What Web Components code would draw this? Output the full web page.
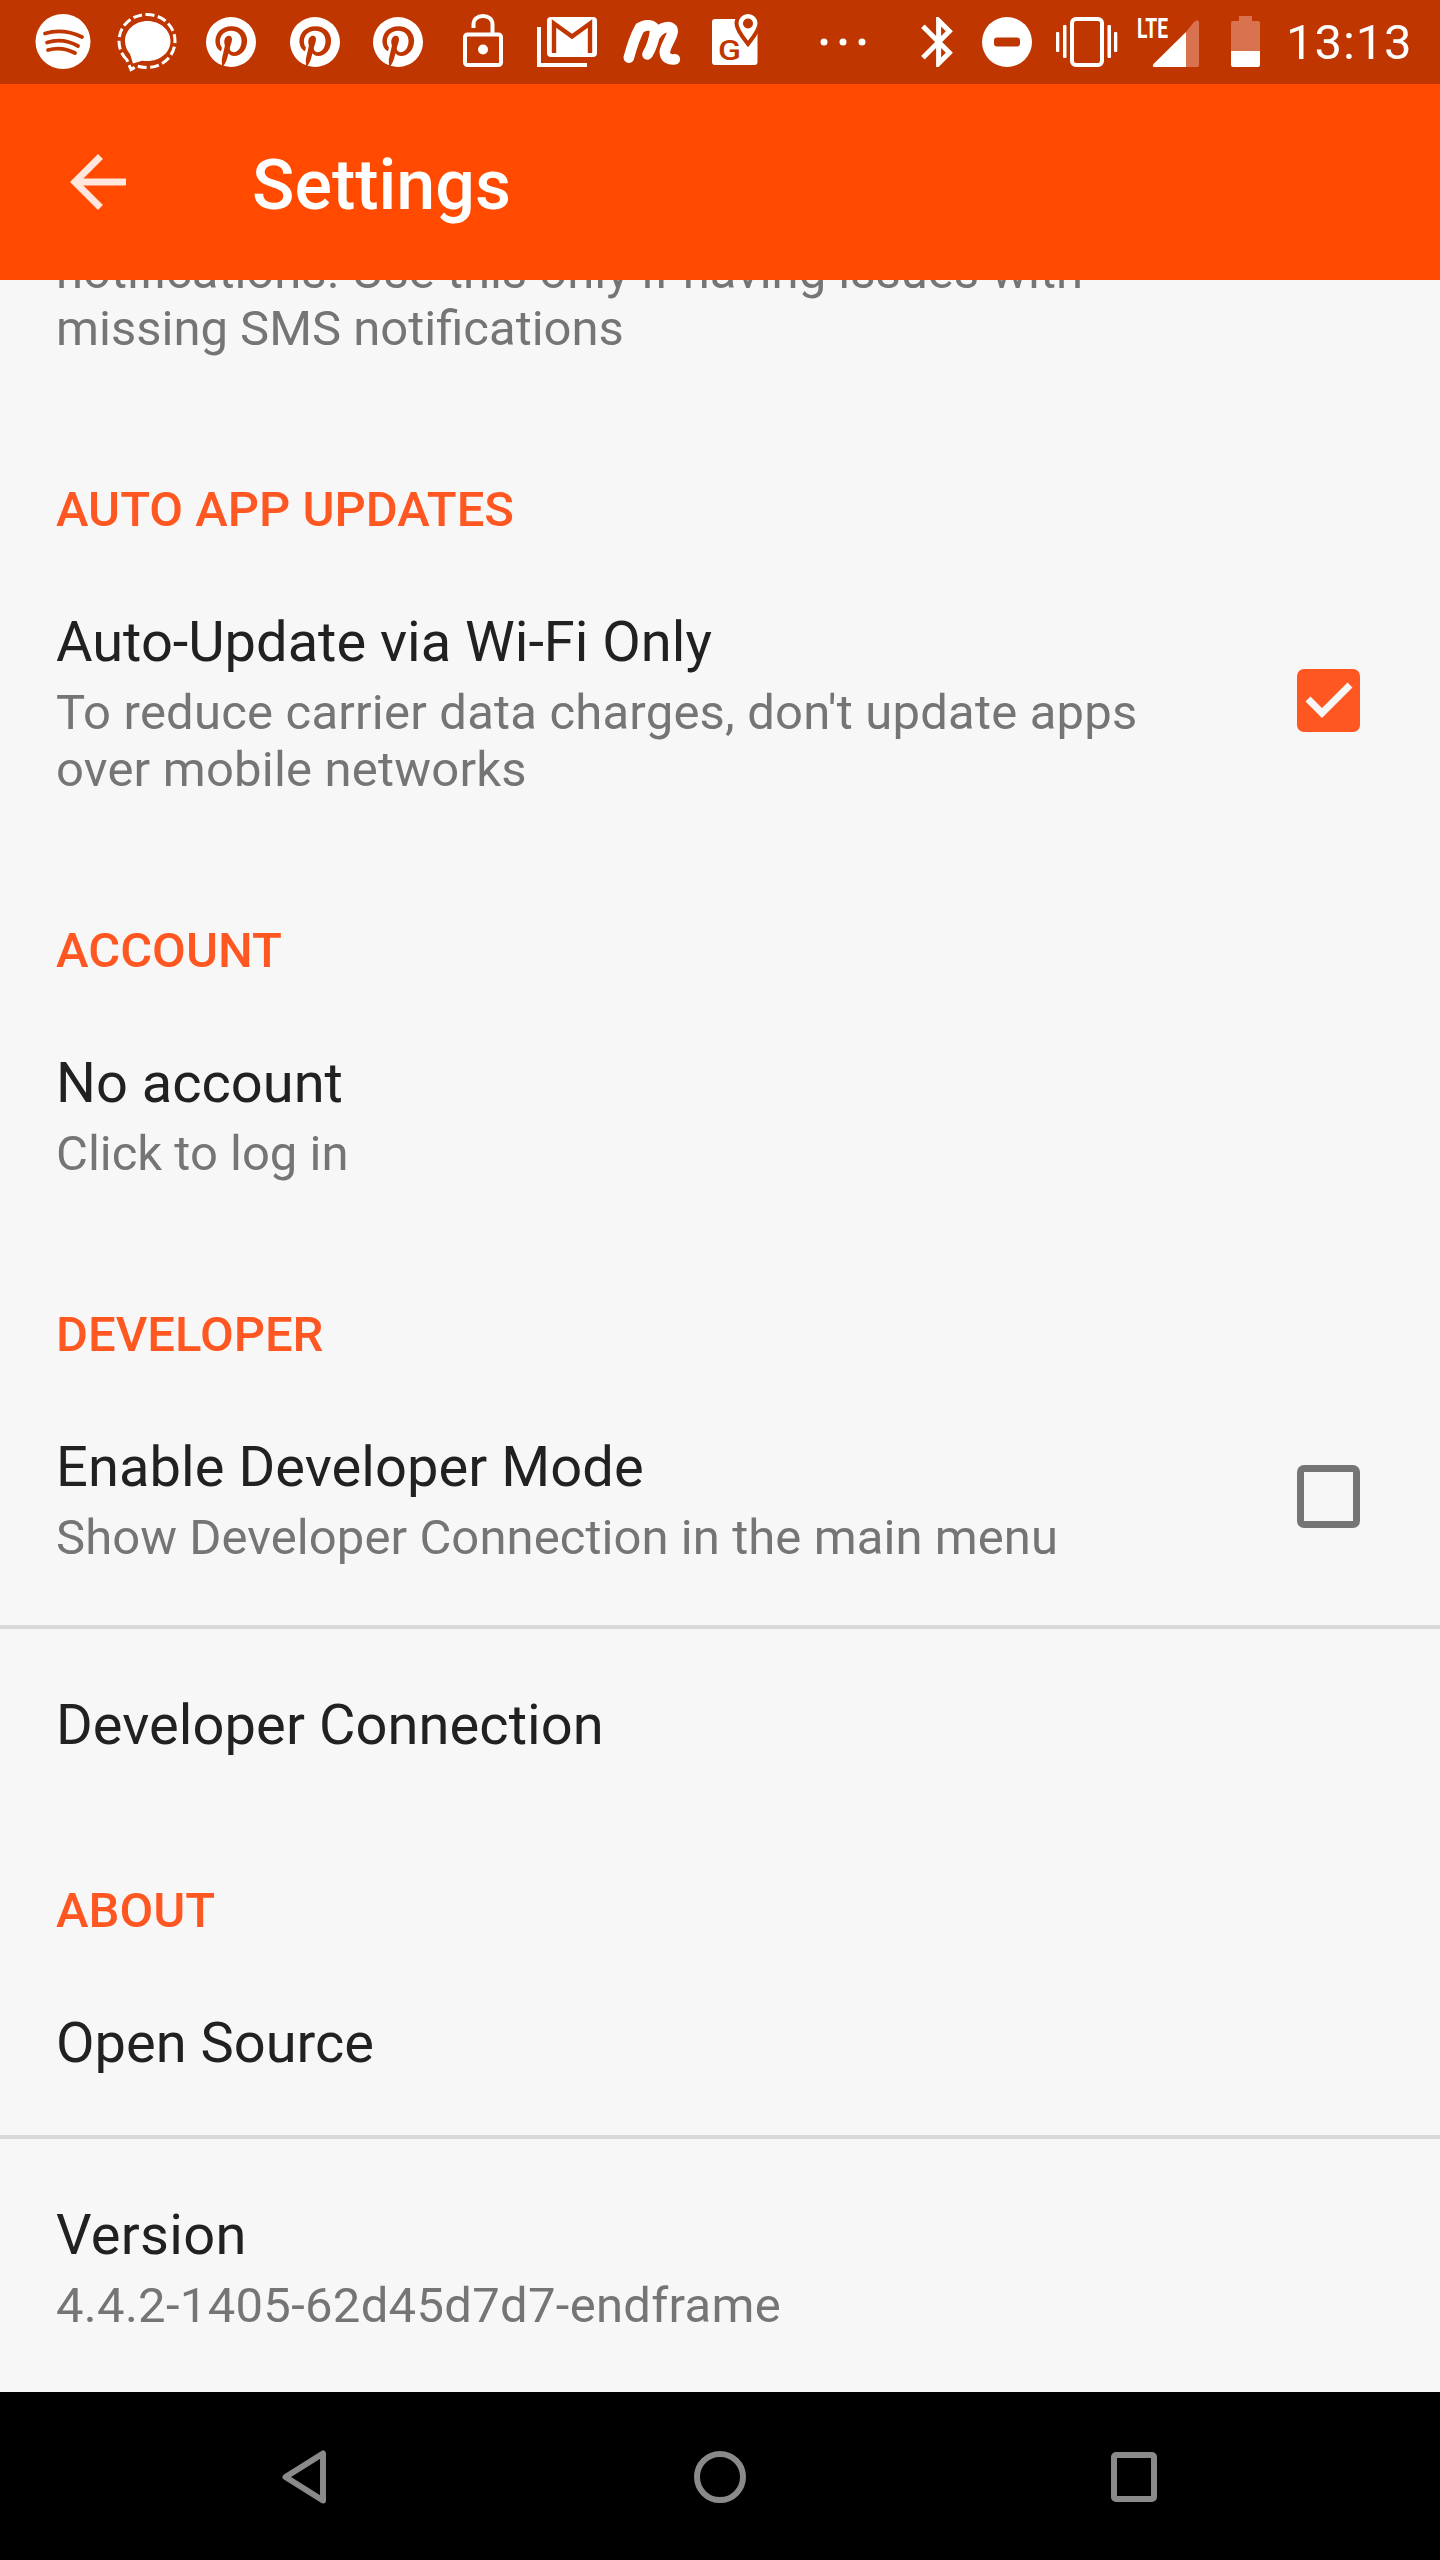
<!DOCTYPE html>
<html lang="en">
<head>
<meta charset="utf-8">
<title>Settings</title>
<style>
  html, body { margin: 0; padding: 0; }
  body { font-family: Roboto, "Liberation Sans", sans-serif; background: #f7f7f7; }
</style>
</head>
<body>
<settings-app>
  <app-statusbar slot="status"></app-statusbar>
  <app-toolbar slot="toolbar">Settings</app-toolbar>

  <pref-item clipped>
    <span slot="summary">notifications. Use this only if having issues with<br>missing SMS notifications</span>
  </pref-item>

  <pref-category>Auto app updates</pref-category>
  <pref-item checkbox="on">
    <span slot="title">Auto-Update via Wi-Fi Only</span>
    <span slot="summary" style="letter-spacing:.2px">To reduce carrier data charges, don't update apps over mobile networks</span>
  </pref-item>

  <pref-category>Account</pref-category>
  <pref-item>
    <span slot="title">No account</span>
    <span slot="summary">Click to log in</span>
  </pref-item>

  <pref-category>Developer</pref-category>
  <pref-item checkbox="off" divider>
    <span slot="title" style="letter-spacing:.08px">Enable Developer Mode</span>
    <span slot="summary" style="letter-spacing:.07px">Show Developer Connection in the main menu</span>
  </pref-item>
  <pref-item>
    <span slot="title" style="letter-spacing:.08px">Developer Connection</span>
  </pref-item>

  <pref-category>About</pref-category>
  <pref-item divider>
    <span slot="title">Open Source</span>
  </pref-item>
  <pref-item>
    <span slot="title" style="letter-spacing:.3px">Version</span>
    <span slot="summary" style="letter-spacing:.3px">4.4.2-1405-62d45d7d7-endframe</span>
  </pref-item>

  <app-navbar slot="nav"></app-navbar>
</settings-app>

<script>
const PIN = 'M9.04,21.54C10,21.83 10.97,22 12,22A10,10 0 0,0 22,12A10,10 0 0,0 12,2A10,10 0 0,0 2,12C2,16.25 4.67,19.9 8.44,21.34C8.35,20.56 8.26,19.27 8.44,18.38L9.59,13.44C9.59,13.44 9.3,12.86 9.3,11.94C9.3,10.56 10.16,9.53 11.14,9.53C12,9.53 12.4,10.16 12.4,10.97C12.4,11.83 11.83,13.06 11.54,14.24C11.37,15.22 12.06,16.08 13.06,16.08C14.84,16.08 16.22,14.18 16.22,11.5C16.22,9.1 14.5,7.46 12.03,7.46C9.21,7.46 7.55,9.56 7.55,11.77C7.55,12.63 7.83,13.5 8.29,14.07C8.38,14.13 8.38,14.21 8.35,14.36L8.06,15.45C8.06,15.62 7.95,15.68 7.78,15.56C6.5,15 5.76,13.18 5.76,11.71C5.76,8.55 8,5.68 12.32,5.68C15.76,5.68 18.44,8.15 18.44,11.43C18.44,14.87 16.31,17.63 13.26,17.63C12.29,17.63 11.34,17.11 11,16.5L10.33,18.87C10.1,19.73 9.47,20.88 9.04,21.57V21.54Z';

class SettingsApp extends HTMLElement {
  constructor() {
    super();
    this.attachShadow({ mode: 'open' });
    this.shadowRoot.innerHTML = `
      <style>
        :host { display: flex; flex-direction: column; height: 2560px; overflow: hidden; background: #f7f7f7; }
        main { flex: 1; min-height: 0; overflow: hidden; display: flex; flex-direction: column; }
      </style>
      <slot name="status"></slot>
      <slot name="toolbar"></slot>
      <main><slot></slot></main>
      <slot name="nav"></slot>
    `;
  }
}

class AppStatusbar extends HTMLElement {
  constructor() {
    super();
    this.attachShadow({ mode: 'open' });
    const bg = '#bf3600';
    const dim = '#d9734f';
    this.shadowRoot.innerHTML = `
      <style>
        :host { display: flex; align-items: flex-start; height: 84px; flex: none; background: ${bg}; color: #fff; padding-left: 35px; box-sizing: border-box; }
        svg { display: block; flex: none; fill: #fff; overflow: visible; }
        .time { margin-left: 26px; font: 400 49px/86px Roboto, sans-serif; letter-spacing: .9px; }
      </style>
      <svg width="56" height="56" viewBox="35 14 56 56" style="margin-top:14px">
        <circle cx="63" cy="41.5" r="27.5"/>
        <g fill="none" stroke="${bg}" stroke-width="3.8" stroke-linecap="round">
          <path d="M45 33.5Q63 28 82 37"/><path d="M47 42.5Q63 37.5 78 46"/><path d="M48 50Q62 46 75 53"/>
        </g>
      </svg>
      <svg width="62" height="60" viewBox="117 12 62 60" style="margin:12px 0 0 26px">
        <path d="M147.500 21C135 21 125 30 125 41C125 46.500 127 50.500 130 54L133 63.500L142 60.800C144 61 146 61 147.500 61C160 61 170.500 52.500 170.500 41C170.500 30 160 21 147.500 21Z"/>
        <path d="M127 60C121.500 54.500 119 48 119 41C119 26 131.500 14.500 147 14.500C162.500 14.500 175 26 175 41C175 56 162.500 67.500 147 67.500C143 67.500 140 67 137 66L131 69.500L127 60Z" fill="none" stroke="#fff" stroke-width="3" stroke-dasharray="9 3.500"/>
      </svg>
      <svg width="50" height="50" viewBox="2 2 20 20" style="margin:17px 0 0 27px"><path d="${PIN}"/></svg>
      <svg width="50" height="50" viewBox="2 2 20 20" style="margin:17px 0 0 34px"><path d="${PIN}"/></svg>
      <svg width="50" height="50" viewBox="2 2 20 20" style="margin:17px 0 0 33px"><path d="${PIN}"/></svg>
      <svg width="40" height="54" viewBox="463 14 40 54" style="margin:14px 0 0 40px">
        <g fill="none" stroke="#fff" stroke-width="4">
          <rect x="465" y="34.500" width="36" height="30.500" rx="2.500"/>
          <path d="M473.500 28V24.500C473.500 19 477.500 16 483 16C488.500 16 492.500 19 492.500 24.500V34"/>
        </g>
        <circle cx="483" cy="49.500" r="5"/>
      </svg>
      <svg width="60" height="50" viewBox="537 17 60 50" style="margin:17px 0 0 34px">
        <path d="M539 27V65H587" fill="none" stroke="#fff" stroke-width="4"/>
        <rect x="547" y="17" width="50" height="40" rx="4"/>
        <path d="M554 53V23.500L572 36.500L590 23.500V53" fill="none" stroke="${bg}" stroke-width="4.400"/>
      </svg>
      <svg width="57" height="45" viewBox="505 45 170 135" style="margin:20px 0 0 26px">
        <path d="M522 158C532 120 542 92 555 68M555 70C570 58 605 55 600 85C596 110 590 128 578 148M598 95C610 72 640 58 652 72C660 85 632 120 630 140C630 160 645 165 660 163" fill="none" stroke="#fff" stroke-width="32" stroke-linecap="round" stroke-linejoin="round"/>
      </svg>
      <svg width="47" height="54" viewBox="711 12 47 54" style="margin:12px 0 0 31px">
        <rect x="712" y="19" width="45.500" height="46" rx="3"/>
        <path d="M748 12C741.500 12 736.500 17 736.500 23.500C736.500 30 743 37.500 748 44C753 37.500 759.500 30 759.500 23.500C759.500 17 754.500 12 748 12Z" stroke="${bg}" stroke-width="4"/>
        <circle cx="748" cy="23.500" r="5" fill="${bg}"/>
        <text x="718" y="60" font-family="Roboto" font-weight="500" font-size="28" textLength="23" lengthAdjust="spacingAndGlyphs" fill="${bg}">G</text>
      </svg>
      <svg width="46" height="8" viewBox="0 0 46 8" style="margin:38px 0 0 62px">
        <circle cx="4" cy="4" r="3.500"/><circle cx="23" cy="4" r="3.500"/><circle cx="42" cy="4" r="3.500"/>
      </svg>
      <svg width="32" height="50" viewBox="5 2 12.710 20" style="margin:17px 0 0 55px"><path d="M17.710 7.710L12 2h-1v7.590L6.410 5 5 6.410 10.590 12 5 17.590 6.410 19 11 14.410V22h1l5.710-5.710-4.300-4.290 4.300-4.290zM13 5.830l1.880 1.880L13 9.590V5.830zm1.880 10.460L13 18.170v-3.760l1.880 1.880z"/></svg>
      <svg width="50" height="50" viewBox="0 0 50 50" style="margin:17px 0 0 29px">
        <circle cx="25" cy="25" r="25"/><rect x="12" y="20.500" width="26" height="9" rx="3" fill="${bg}"/>
      </svg>
      <svg width="62" height="51" viewBox="1056 16 62 51" style="margin:16px 0 0 24px">
        <rect x="1072" y="19" width="30" height="46" rx="4" fill="none" stroke="#fff" stroke-width="4"/>
        <rect x="1063" y="25" width="3.500" height="33" rx="1"/><rect x="1056" y="32" width="3.300" height="20" rx="1"/>
        <rect x="1107.500" y="25" width="3.500" height="33" rx="1"/><rect x="1114" y="32" width="3.300" height="20" rx="1"/>
      </svg>
      <svg width="63" height="51" viewBox="1137 16 63 51" style="margin:16px 0 0 19px">
        <text x="1137" y="38" font-family="Roboto" font-weight="700" font-size="27" textLength="31" lengthAdjust="spacingAndGlyphs">LTE</text>
        <path d="M1186 32L1154 63.500Q1151 67 1155 67H1186Z"/>
        <path d="M1186 32L1194 22Q1199 18 1199 23V65Q1199 67 1197 67H1186Z" fill="${dim}"/>
      </svg>
      <svg width="29" height="51" viewBox="1231 16 29 51" style="margin:16px 0 0 31px">
        <path d="M1239 21V16H1252V21H1258Q1260 21 1260 23V51H1231V23Q1231 21 1233 21Z" fill="${dim}"/>
        <path d="M1231 51H1260V65Q1260 67 1258 67H1233Q1231 67 1231 65Z"/>
      </svg>
      <span class="time">13:13</span>
    `;
  }
}

class AppToolbar extends HTMLElement {
  constructor() {
    super();
    this.attachShadow({ mode: 'open' });
    this.shadowRoot.innerHTML = `
      <style>
        :host { display: flex; align-items: center; height: 196px; flex: none; position: relative; z-index: 1; background: #ff4a00; color: #fff; font: 500 70px/84px Roboto, sans-serif; padding-left: 56px; box-sizing: border-box; }
        svg { display: block; flex: none; fill: #fff; fill-opacity: .87; }
        .title { margin: 6px 0 0 112px; }
      </style>
      <svg width="84" height="84" viewBox="0 0 24 24"><path d="M20 11H7.830l5.590-5.590L12 4l-8 8 8 8 1.410-1.410L7.830 13H20v-2z"/></svg>
      <span class="title"><slot></slot></span>
    `;
  }
}

class PrefCategory extends HTMLElement {
  constructor() {
    super();
    this.attachShadow({ mode: 'open' });
    this.shadowRoot.innerHTML = `
      <style>
        :host { display: block; flex: none; margin-top: 68px; padding: 0 56px 14px; color: #ff5722; font: 500 49px/58px Roboto, sans-serif; text-transform: uppercase; }
      </style>
      <slot></slot>
    `;
  }
}

class PrefItem extends HTMLElement {
  constructor() {
    super();
    this.attachShadow({ mode: 'open' });
    this.shadowRoot.innerHTML = `
      <style>
        :host { display: flex; flex: none; align-items: center; padding: 56px 80px 56px 56px; box-sizing: border-box; }
        :host([clipped]) { padding-top: 0; margin-top: -37px; }
        :host([divider]) { border-bottom: 4px solid #d9d9d9; padding-bottom: 59px; margin-bottom: 7px; }
        .text { flex: 1; min-width: 0; padding-right: 60px; }
        .title { color: #212121; font: 400 56px/66px Roboto, sans-serif; }
        .summary { color: #757575; font: 400 49px/57px Roboto, sans-serif; margin-top: 9px; }
        :host([clipped]) .summary { margin-top: 0; }
        .box { flex: none; width: 63px; height: 63px; box-sizing: border-box; border-radius: 7px; margin-bottom: 7px; display: none; }
        :host([checkbox="on"]) .box { display: block; background: #ff5722; }
        :host([checkbox="off"]) .box { display: block; border: 7px solid #757575; }
        :host([checkbox="off"]) svg { display: none; }
        svg { display: block; }
      </style>
      <div class="text">
        <div class="title"><slot name="title"></slot></div>
        <div class="summary"><slot name="summary"></slot></div>
      </div>
      <div class="box">
        <svg width="63" height="63" viewBox="0 0 63 63"><path d="M11 30L25 44L53 16" fill="none" stroke="#f7f7f7" stroke-width="7"/></svg>
      </div>
    `;
  }
  connectedCallback() {
    if (!this.querySelector('[slot="summary"]')) {
      this.shadowRoot.querySelector('.summary').style.display = 'none';
    }
  }
}

class AppNavbar extends HTMLElement {
  constructor() {
    super();
    this.attachShadow({ mode: 'open' });
    this.shadowRoot.innerHTML = `
      <style>
        :host { display: flex; align-items: flex-start; flex: none; height: 168px; background: #000; padding-left: 282px; box-sizing: border-box; }
        svg { display: block; flex: none; fill: none; stroke: #8a8a8a; stroke-width: 6; stroke-linejoin: round; margin-top: 58px; }
      </style>
      <svg width="44" height="54" viewBox="0 0 44 54"><path d="M41 3.500V50.500L3.500 27Z"/></svg>
      <svg width="52" height="54" viewBox="0 0 52 54" style="margin-left:368px"><circle cx="26" cy="27" r="23"/></svg>
      <svg width="48" height="54" viewBox="0 0 48 54" style="margin-left:364px"><rect x="4" y="5" width="40" height="44" rx="2"/></svg>
    `;
  }
}

customElements.define('settings-app', SettingsApp);
customElements.define('app-statusbar', AppStatusbar);
customElements.define('app-toolbar', AppToolbar);
customElements.define('pref-category', PrefCategory);
customElements.define('pref-item', PrefItem);
customElements.define('app-navbar', AppNavbar);
</script>
</body>
</html>
